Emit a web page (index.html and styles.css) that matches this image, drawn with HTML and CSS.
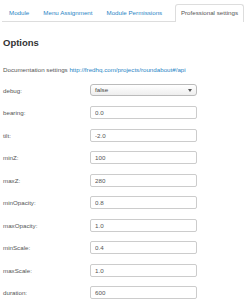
FILE: index.html
```html
<!DOCTYPE html>
<html>
    <head>
        <title>Module settings</title>
        <link rel="stylesheet" href="styles.css">
    </head>
    <body>
        <ul class="tabs">
            <li class="tab"><a href="#">Module</a></li>
            <li class="tab"><a href="#">Menu Assignment</a></li>
            <li class="tab"><a href="#">Module Permissions</a></li>
            <li class="tab active"><a href="#">Professional settings</a></li>
        </ul>
        <div class="pane">
            <h3 class="title">Options</h3>
            <p class="docs">Documentation settings <a href="#">http://fredhq.com/projects/roundabout#/api</a></p>
            <div class="row">
                <label>debug:</label>
                <div class="select">false<span class="caret"></span></div>
            </div>
            <div class="row"><label>bearing:</label><input type="text" value="0.0"></div>
            <div class="row"><label>tilt:</label><input type="text" value="-2.0"></div>
            <div class="row"><label>minZ:</label><input type="text" value="100"></div>
            <div class="row"><label>maxZ:</label><input type="text" value="280"></div>
            <div class="row"><label>minOpacity:</label><input type="text" value="0.8"></div>
            <div class="row"><label>maxOpacity:</label><input type="text" value="1.0"></div>
            <div class="row"><label>minScale:</label><input type="text" value="0.4"></div>
            <div class="row"><label>maxScale:</label><input type="text" value="1.0"></div>
            <div class="row"><label>duration:</label><input type="text" value="600"></div>
        </div>
    </body>
</html>
```
FILE: styles.css
```css
body{
    margin: 0;
    background: #fff;
    font-family: "Liberation Sans", Arial, sans-serif;
    font-size: 6.2px;
    color: #555;
}
a{
    color: #2a85c5;
    text-decoration: none;
}
.tabs{
    display: flex;
    list-style: none;
    margin: 4px 0 0 2px;
    padding: 0;
    width: 242px;
    border-bottom: 1px solid #ddd;
    white-space: nowrap;
}
.tab a{
    display: block;
    padding: 0 6px;
    line-height: 16px;
    border: 1px solid transparent;
    border-bottom: 0;
    border-radius: 3px 3px 0 0;
}
.tab.active{
    margin-left: auto;
}
.tab.active a{
    color: #555;
    background: #fff;
    border-color: #ddd;
    margin-bottom: -1px;
    padding: 0 5px 1px;
}
.pane{
    padding: 0 3px;
}
.title{
    margin: 15px 0 0 0;
    font-size: 9.5px;
    line-height: 12px;
    color: #333;
}
.docs{
    margin: 16px 0 0 0;
    line-height: 9px;
}
.row{
    display: flex;
    align-items: center;
    height: 13px;
    margin-top: 9.5px;
}
.row label{
    width: 87px;
}
.row input{
    box-sizing: border-box;
    width: 107px;
    height: 13px;
    margin: 0;
    padding: 0 4px;
    border: 1px solid #ccc;
    border-radius: 2px;
    font: inherit;
    color: #555;
}
.select{
    position: relative;
    box-sizing: border-box;
    width: 107px;
    height: 12px;
    line-height: 10px;
    padding: 0 4px;
    border: 1px solid #bbb;
    border-radius: 3px;
    background: linear-gradient(#fff, #eee);
    color: #444;
}
.caret{
    position: absolute;
    right: 4px;
    top: 4px;
    border-top: 3px solid #555;
    border-left: 2px solid transparent;
    border-right: 2px solid transparent;
}
```
